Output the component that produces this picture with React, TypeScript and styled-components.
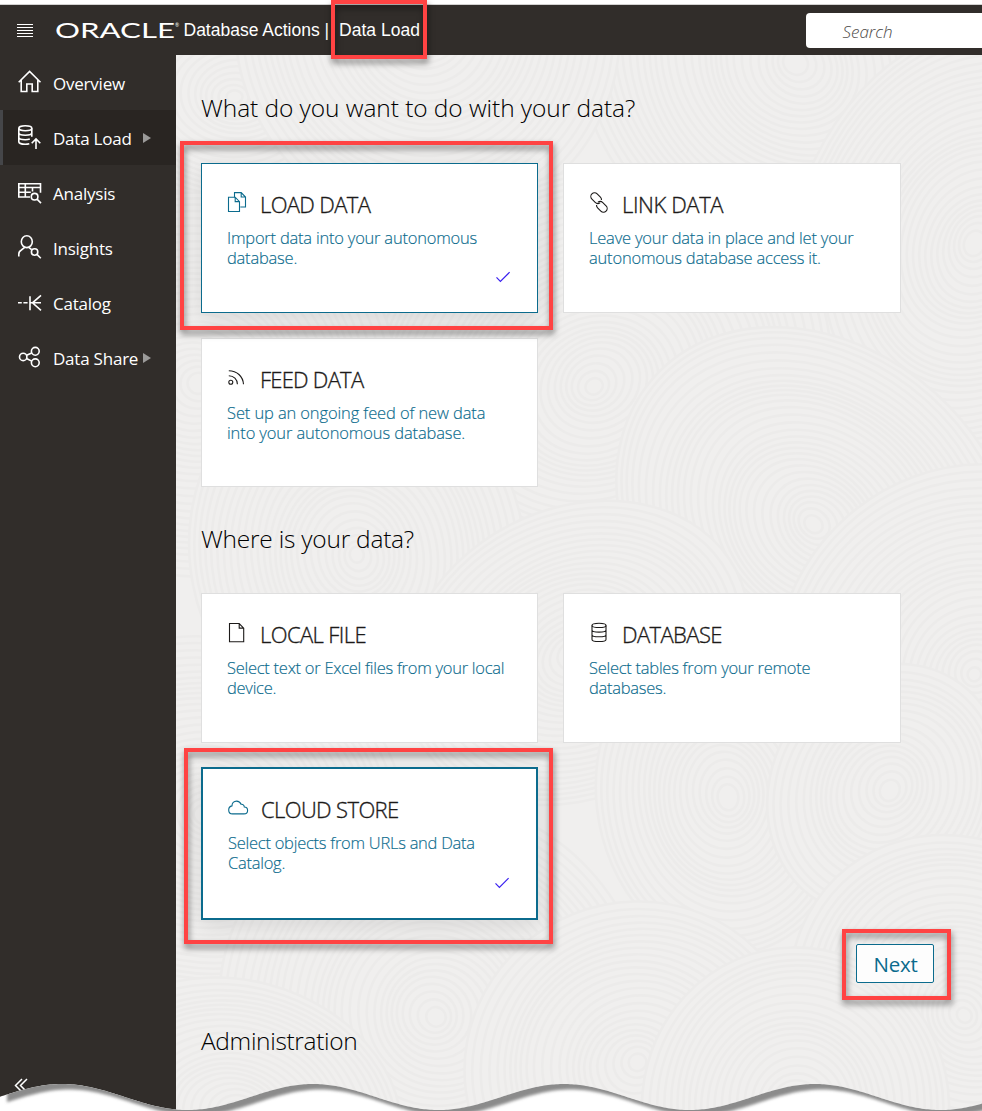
import React from "react";
import styled, { createGlobalStyle, css } from "styled-components";

const TEAL = "#0b6b8d";
const INK = "#1c1a19";
const UI_FONT = '"Open Sans", "Noto Sans", sans-serif';

const GlobalStyle = createGlobalStyle`
  * { box-sizing: border-box; }
  body { margin: 0; background: #fff; font-family: ${UI_FONT}; }
`;

const Page = styled.div`
  position: relative;
  display: flex;
  flex-direction: column;
  width: 982px;
  height: 1111px;
  padding-top: 4px;
  overflow: hidden;
  background: #fff;
`;

/* ---------- top bar ---------- */

const TopBar = styled.header`
  display: flex;
  align-items: center;
  flex: none;
  height: 51px;
  padding-left: 17px;
  border-top: 1px solid #d3d2d1;
  background: #312d2a;
  color: #fff;
`;

const MenuIcon = styled.svg`
  flex: none;
  margin-right: 23px;
`;

const Logo = styled.svg`
  flex: none;
  overflow: visible;
`;

const AppName = styled.div`
  margin-left: 4.5px;
  font: 17.5px/50px "Liberation Sans", Arial, sans-serif;
  white-space: nowrap;
`;

const PageName = styled.div`
  position: relative;
  margin-left: 10px;
  font: 17.5px/50px "Liberation Sans", Arial, sans-serif;
  white-space: nowrap;
`;

const SearchBox = styled.div`
  flex: none;
  width: 176px;
  height: 35px;
  margin-left: auto;
  padding-left: 36.5px;
  border-radius: 4px 0 0 4px;
  background: #fff;
  color: #4c4947;
  font-size: 17px;
  font-style: italic;
  font-weight: 300;
  line-height: 37px;
`;

/* ---------- side navigation ---------- */

const Body = styled.div`
  display: flex;
  flex: 1;
  min-height: 0;
`;

const SideNav = styled.nav`
  display: flex;
  flex-direction: column;
  flex: none;
  width: 176px;
  background: #312d2a;
  color: #fff;
`;

const NavItem = styled.div<{ $active?: boolean }>`
  display: flex;
  align-items: center;
  height: 55px;
  padding-left: 15px;
  border-left: 3px solid ${(p) => (p.$active ? "#454649" : "transparent")};
  background: ${(p) => (p.$active ? "#292522" : "transparent")};
`;

const NavIcon = styled.svg`
  flex: none;
  margin-right: 11px;
  overflow: visible;
`;

const NavLabel = styled.span`
  width: 90px;
  font-size: 17px;
  line-height: 27px;
  letter-spacing: -0.22px;
  padding-top: 2px;
  white-space: nowrap;
`;

const Expander = styled.span`
  width: 0;
  height: 0;
  border-left: 8px solid #9b9a99;
  border-top: 5.5px solid transparent;
  border-bottom: 5.5px solid transparent;
`;

const Collapse = styled.svg`
  margin: auto 0 18px 14px;
`;

/* ---------- main area ---------- */

const Main = styled.main`
  position: relative;
  flex: 1;
  padding: 35px 48px 0 25px;
  overflow: hidden;
  background: #f0efee;
`;

const Texture = styled.svg`
  position: absolute;
  inset: 0;
`;

const Content = styled.div`
  position: relative;
  display: flex;
  flex-direction: column;
`;

const Heading = styled.h1<{ $track?: number }>`
  margin: 0;
  color: #000;
  font-size: 24.5px;
  font-weight: 300;
  line-height: 36px;
  letter-spacing: ${(p) => p.$track ?? 0}px;
`;

const CardGrid = styled.div<{ $rows: string; $gap: number; $top: number }>`
  display: grid;
  grid-template-columns: 337px 338px;
  grid-template-rows: ${(p) => p.$rows};
  gap: ${(p) => p.$gap}px 25px;
  margin: ${(p) => p.$top}px 0 34px;
`;

const CardBox = styled.section<{ $line: "none" | "thin" | "thick" }>`
  position: relative;
  padding: 25px 24px 0 25px;
  border: 1px solid #dfdfdf;
  background: #fff;
  ${(p) =>
    p.$line !== "none" &&
    css`
      border-color: ${TEAL};
      box-shadow: 0 6px 22px rgba(0, 0, 0, 0.1);
    `}
  ${(p) =>
    p.$line === "thick" &&
    css`
      border-width: 2px;
    `}
`;

const CardHead = styled.div`
  display: flex;
  align-items: center;
  height: 30px;
  margin-bottom: 9px;
`;

const CardIcon = styled.svg`
  flex: none;
  margin: -5px 12px 0 0;
  overflow: visible;
`;

const CardTitle = styled.h2<{ $track: number }>`
  margin: 0;
  color: ${INK};
  font-size: 22px;
  font-weight: 300;
  -webkit-text-stroke: 0.35px ${INK};
  line-height: 30px;
  letter-spacing: ${(p) => p.$track}px;
  white-space: nowrap;
`;

const CardText = styled.p<{ $track: number }>`
  margin: 0;
  color: ${TEAL};
  font-size: 16.5px;
  font-weight: 300;
  -webkit-text-stroke: 0.15px ${TEAL};
  line-height: 20px;
  letter-spacing: ${(p) => p.$track}px;
  white-space: pre;
`;

const Check = styled.svg`
  position: absolute;
  right: 26px;
  bottom: 29px;
`;

const Actions = styled.div`
  display: flex;
  justify-content: flex-end;
  margin: -10px 0 40px;
`;

const NextWrap = styled.div`
  position: relative;
`;

const NextButton = styled.button`
  display: block;
  width: 78px;
  height: 39px;
  padding: 0 0 0 1px;
  border: 1px solid ${TEAL};
  border-radius: 2px;
  background: #fdfdfd;
  color: ${TEAL};
  font: 400 20.5px/39px ${UI_FONT};
  letter-spacing: -0.2px;
`;

const Callout = styled.span<{ $t: number; $r: number; $b: number; $l: number }>`
  position: absolute;
  z-index: 2;
  top: ${(p) => -p.$t}px;
  right: ${(p) => -p.$r}px;
  bottom: ${(p) => -p.$b}px;
  left: ${(p) => -p.$l}px;
  border: 4px solid #ff4343;
  filter: drop-shadow(1px 4px 3px rgba(0, 0, 0, 0.5));
  pointer-events: none;
`;

const TornEdge = styled.svg`
  position: absolute;
  left: 0;
  bottom: 0;
  z-index: 3;
`;

/* ---------- drawings ---------- */

const navIcons: Record<string, React.ReactNode> = {
  home: <path d="M.7 12.3 11.6 1.4l10.9 10.9M3.2 10.2v11.3h5.6V14h5.4v7.5h5.6V10.2" />,
  load: (
    <>
      <ellipse cx="7.3" cy="3.3" rx="6.5" ry="2.5" />
      <path d="M.8 3.3v13.4c0 1.4 3 2.6 6.5 2.6 1.5 0 2.9-.2 4-.5M13.8 3.3v8.5M.8 7.8c0 1.4 3 2.5 6.5 2.5s6.5-1.1 6.5-2.5M.8 12.3c0 1.4 3 2.5 6.5 2.5 1.8 0 3.4-.3 4.5-.7M18 24V14.2M13.7 18.3l4.3-4.3 4.3 4.3" />
    </>
  ),
  analysis: (
    <>
      <path d="M12 17H.8V3.8h21.7v9M.8 7.5h21.7M.8 12.2h12M7.3 3.8V17M14.5 7.5v4" />
      <circle cx="16.6" cy="16.7" r="3.3" />
      <path d="m19 19.1 4 4" />
    </>
  ),
  insights: (
    <>
      <ellipse cx="8.8" cy="6.7" rx="5.5" ry="5.9" />
      <path d="M.8 21.5v-2.3c0-2 .8-3.3 2.6-4.2l3.3-2.6M10.8 12.4l2.8 2.3" />
      <circle cx="16.6" cy="17" r="3.2" />
      <path d="m19 19.4 3.8 3.8" />
    </>
  ),
  catalog: <path d="M0 12.8h3.8M5.4 12.8h4.2M12 6.3v14M12 12.8h11M23 5.3l-8.5 7.5 8.5 7.5" />,
  share: (
    <>
      <circle cx="5.2" cy="11.9" r="3.7" />
      <circle cx="17.3" cy="6.3" r="3.9" />
      <circle cx="17.3" cy="17.8" r="3.9" />
      <path d="m8.6 10.3 5.1-2.3M8.5 13.5l5.2 2.6" />
    </>
  ),
};

const navItems = [
  { icon: "home", label: "Overview" },
  { icon: "load", label: "Data Load", active: true, expands: true },
  { icon: "analysis", label: "Analysis" },
  { icon: "insights", label: "Insights" },
  { icon: "catalog", label: "Catalog" },
  { icon: "share", label: "Data Share", expands: true },
];

const cardIcons: Record<string, React.ReactNode> = {
  copy: (
    <g stroke={TEAL}>
      <path d="M6.5 5.2V.6h6.7L17.5 5v10h-5.2M13.2.6V5h4.3" />
      <path d="M.5 5.2h6.7l4.3 4.4v9.9H.5zM7.2 5.2v4.4h4.3" />
    </g>
  ),
  link: (
    <g transform="rotate(45 9 10.5)" strokeWidth="1.1">
      <path d="M9 7c-.7-.8-1.700-1.300-2.800-1.300H1.600a3.700 3.700 0 0 0 0 7.400h4.600a3.700 3.700 0 0 0 3.700-3.400" />
      <path d="M9 14c.7.8 1.700 1.300 2.800 1.300h4.600a3.700 3.700 0 0 0 0-7.400h-4.600a3.700 3.700 0 0 0-3.700 3.400" />
    </g>
  ),
  feed: (
    <>
      <circle cx="2.8" cy="15.3" r="2" />
      <path d="M.8 8.7c4.9 0 8.6 3.7 8.6 8.6M.8 3.7c8 0 14.2 5.6 14.7 13.6M1.500 6.200" />
    </>
  ),
  file: <path d="M1.5 1.5h9.700l4.500 4.600v13.600H1.500zM11.200 1.500v4.600h4.500" />,
  database: (
    <>
      <ellipse cx="9" cy="3.4" rx="7" ry="2.1" />
      <path d="M2 3.4v14c0 1.200 3.100 2.100 7 2.100s7-.9 7-2.100v-14M2 8c0 1.200 3.100 2.100 7 2.100s7-.9 7-2.100M2 12.700c0 1.200 3.100 2.100 7 2.100s7-.9 7-2.100" />
    </>
  ),
  cloud: (
    <path
      stroke={TEAL}
      transform="translate(-.8 -.6)"
      d="M4.3 17.5h11.400c2.100 0 3.700-1.500 3.700-3.500 0-1.900-1.400-3.300-3.300-3.400-.1-1.900-1.500-3-3.200-2.700C12.100 6 10.600 4.700 8.400 4.700c-2.700 0-4.700 2-4.600 4.800-2 .4-3.300 1.900-3.300 4 0 2.300 1.600 4 3.800 4z"
    />
  ),
};

type CardProps = {
  icon: string;
  title: string;
  titleTrack: number;
  text: string;
  track: number;
  line?: "none" | "thin" | "thick";
  callout?: { t: number; r: number; b: number; l: number };
};

function Card({ icon, title, titleTrack, text, track, line = "none", callout }: CardProps) {
  return (
    <CardBox $line={line}>
      <CardHead>
        <CardIcon width="21" height="20" viewBox="-1 0 21 20" fill="none" stroke={INK} strokeWidth="1.1">
          {cardIcons[icon]}
        </CardIcon>
        <CardTitle $track={titleTrack}>{title}</CardTitle>
      </CardHead>
      <CardText $track={track}>{text}</CardText>
      {line !== "none" && (
        <Check width="16" height="12" viewBox="0 0 16 12" fill="none" stroke="#3a20f0" strokeWidth="1.2">
          <path d="m1.5 6.4 3.9 4L14.6 1.2" />
        </Check>
      )}
      {callout && <Callout $t={callout.t} $r={callout.r} $b={callout.b} $l={callout.l} />}
    </CardBox>
  );
}

/* Overlapping groups of rings, like combed sand. */
const ringGroups: [number, number, number][] = [
  [60, 40, 190], [620, 10, 230], [250, -30, 200], [800, 190, 230], [420, 330, 240], [20, 330, 200],
  [640, 470, 220], [180, 500, 190], [800, 620, 210], [400, 600, 180], [30, 760, 200], [260, 960, 220],
  [550, 740, 160], [712, 735, 130], [460, 1010, 170], [60, 1060, 170], [790, 960, 190], [620, 1050, 160],
];

function RingTexture() {
  return (
    <Texture width="806" height="1056" fill="#f0efee" stroke="#ecebea" strokeWidth="2.6">
      {ringGroups.map(([cx, cy, size], g) => (
        <g key={g}>
          {Array.from({ length: Math.floor(size / 7) }, (_, i) => {
            const r = size - i * 7;
            return (
              <ellipse
                key={i}
                cx={cx + Math.sin(i * 0.7 + g) * 2.5}
                cy={cy + Math.cos(i * 0.5 + g) * 2}
                rx={r}
                ry={r * (0.8 + (g % 3) * 0.08)}
                transform={`rotate(${g * 37} ${cx} ${cy})`}
              />
            );
          })}
        </g>
      ))}
    </Texture>
  );
}

const wavePoints = Array.from({ length: 492 }, (_, i) => {
  const x = i * 2;
  const y = 17 - 13 * Math.cos(((x - 62) / 251) * Math.PI * 2);
  return `${x} ${y.toFixed(2)}`;
});
const below = `M${wavePoints.join("L")}V44H0Z`;
const above = `M${wavePoints.join("L")}V-40H0Z`;

function TornPageEdge() {
  return (
    <TornEdge width="982" height="31" viewBox="0 0 982 31">
      <defs>
        <clipPath id="torn-clip">
          <path d={below} />
        </clipPath>
        <filter id="torn-blur" x="-2%" y="-40%" width="104%" height="180%">
          <feGaussianBlur stdDeviation="1.6" />
        </filter>
      </defs>
      <path d={below} fill="#fff" />
      <g clipPath="url(#torn-clip)">
        <path d={above} fill="#8b8b8b" transform="translate(7 5.5)" filter="url(#torn-blur)" />
      </g>
    </TornEdge>
  );
}

export default function App() {
  return (
    <Page>
      <GlobalStyle />
      <TopBar>
        <MenuIcon width="16" height="13" viewBox="0 0 16 13" stroke="#fff" strokeWidth="1" shapeRendering="crispEdges">
          <path d="M0 .5h16M0 3.5h16M0 6.5h16M0 9.5h16M0 12.5h16" />
        </MenuIcon>
        <Logo width="123" height="20" viewBox="0 0 123 20" fill="#fff">
          <text x="-1" y="17.5" fontFamily="Lato, sans-serif" fontSize="21.5" fontWeight="400" textLength="120" lengthAdjust="spacingAndGlyphs">
            ORACLE
          </text>
          <text x="119" y="7" fontFamily="Lato, sans-serif" fontSize="5">®</text>
        </Logo>
        <AppName>Database Actions |</AppName>
        <PageName>
          Data Load
          <Callout $t={5} $r={7} $b={4} $l={8} />
        </PageName>
        <SearchBox>Search</SearchBox>
      </TopBar>
      <Body>
        <SideNav>
          {navItems.map((item) => (
            <NavItem key={item.label} $active={item.active}>
              <NavIcon width="24" height="25" viewBox="0 0 24 25" fill="none" stroke="#fff" strokeWidth="1.6">
                {navIcons[item.icon]}
              </NavIcon>
              <NavLabel>{item.label}</NavLabel>
              {item.expands && <Expander />}
            </NavItem>
          ))}
          <Collapse width="14" height="15" viewBox="0 0 14 15" fill="none" stroke="#fff" strokeWidth="1.5">
            <path d="M8 1 1.5 7.5 8 14M13 1 6.5 7.5 13 14" />
          </Collapse>
        </SideNav>
        <Main>
          <RingTexture />
          <Content>
            <Heading $track={-0.07}>What do you want to do with your data?</Heading>
            <CardGrid $rows="150px 149px" $gap={25} $top={37}>
              <Card
                icon="copy"
                title="LOAD DATA"
                titleTrack={-0.65}
                text={"Import data into your autonomous\ndatabase."}
                track={-0.22}
                line="thin"
                callout={{ t: 23, r: 16, b: 18, l: 22 }}
              />
              <Card
                icon="link"
                title="LINK DATA"
                titleTrack={-0.4}
                text={"Leave your data in place and let your\nautonomous database access it."}
                track={-0.2}
              />
              <Card
                icon="feed"
                title="FEED DATA"
                titleTrack={-0.75}
                text={"Set up an ongoing feed of new data\ninto your autonomous database."}
                track={-0.12}
              />
            </CardGrid>
            <Heading $track={-0.24}>Where is your data?</Heading>
            <CardGrid $rows="150px 153px" $gap={24} $top={36}>
              <Card
                icon="file"
                title="LOCAL FILE"
                titleTrack={-0.6}
                text={"Select text or Excel files from your local\ndevice."}
                track={-0.27}
              />
              <Card
                icon="database"
                title="DATABASE"
                titleTrack={-0.6}
                text={"Select tables from your remote\ndatabases."}
                track={-0.27}
              />
              <Card
                icon="cloud"
                title="CLOUD STORE"
                titleTrack={-0.62}
                text={"Select objects from URLs and Data\nCatalog."}
                track={-0.26}
                line="thick"
                callout={{ t: 21, r: 17, b: 26, l: 19 }}
              />
            </CardGrid>
            <Actions>
              <NextWrap>
                <NextButton>Next</NextButton>
                <Callout $t={15} $r={17} $b={17} $l={14} />
              </NextWrap>
            </Actions>
            <Heading $track={-0.34}>Administration</Heading>
          </Content>
        </Main>
      </Body>
      <TornPageEdge />
    </Page>
  );
}
